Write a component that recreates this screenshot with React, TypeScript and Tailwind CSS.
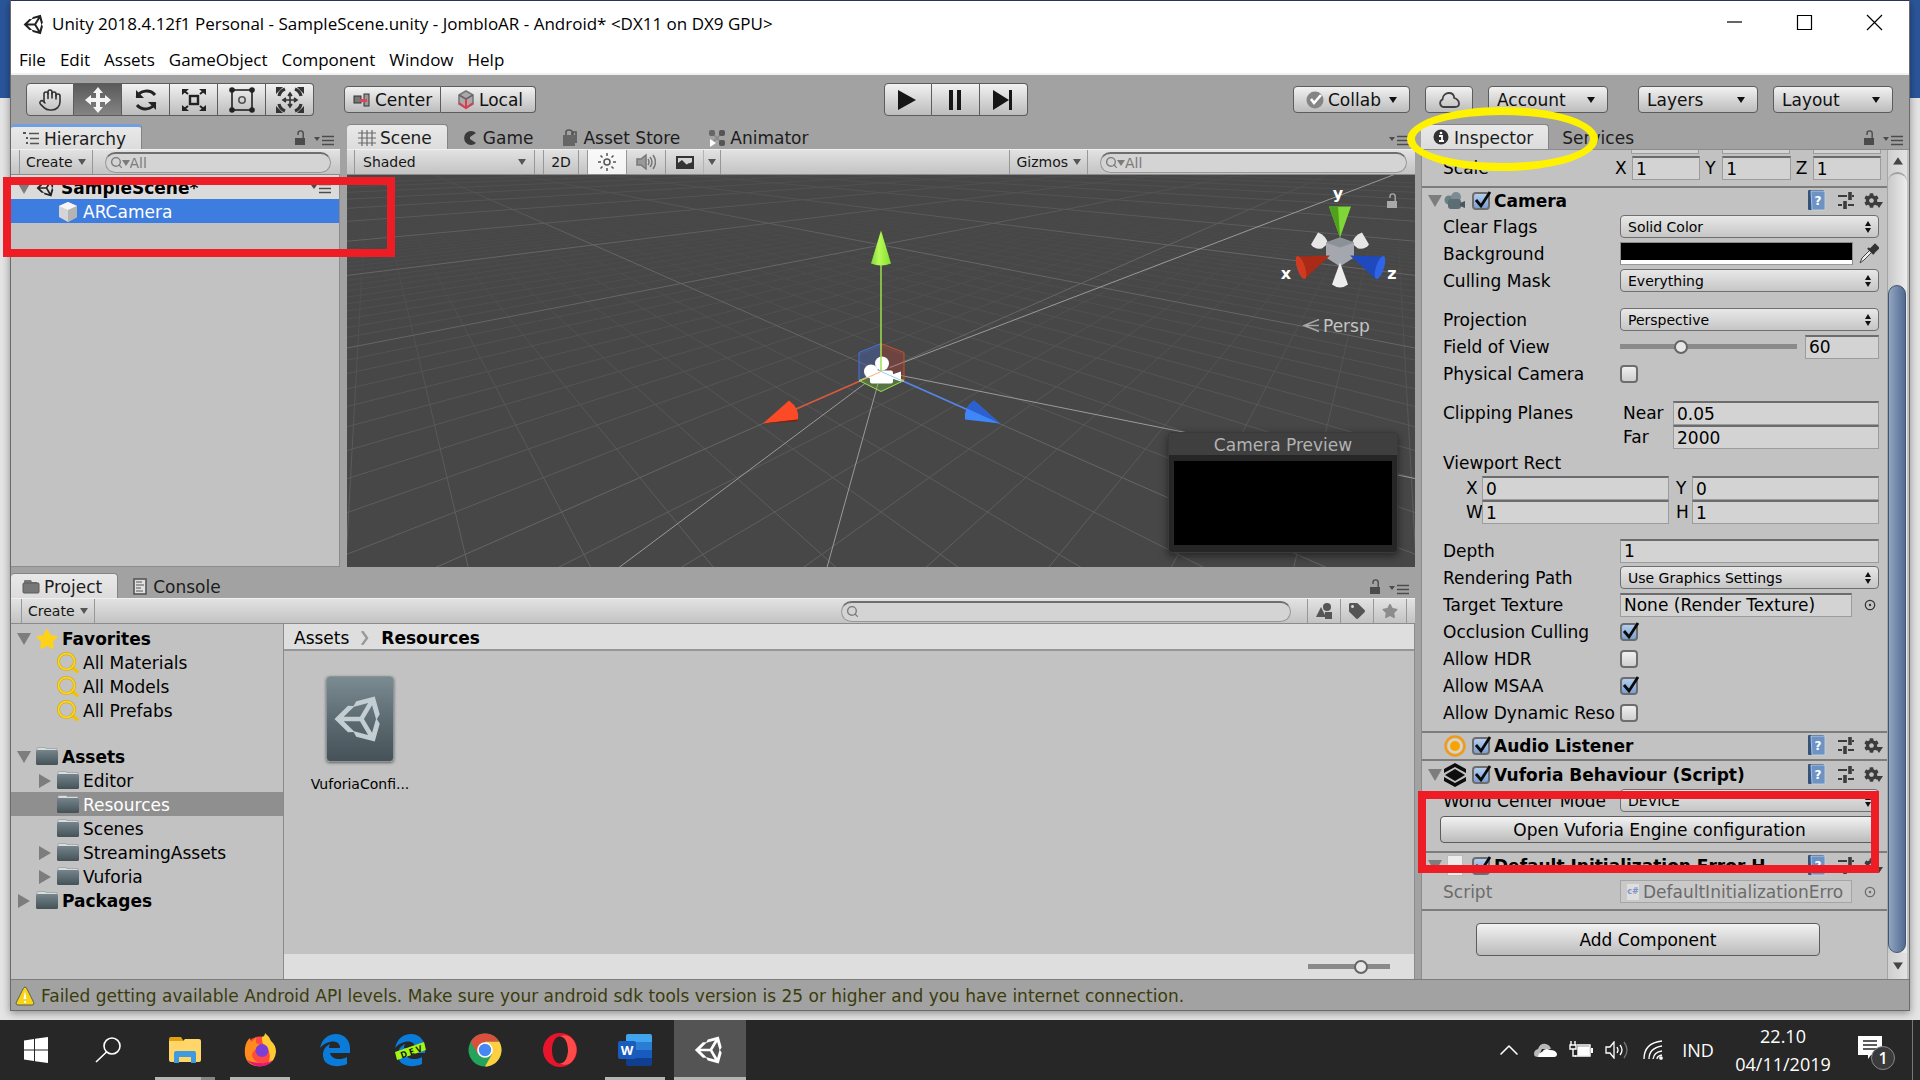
import type { ReactNode } from "react";
import { clsx } from "clsx";
import { ChevronUp, Hand, Search } from "lucide-react";
import { FaCog, FaStar, FaTag, FaUnity } from "react-icons/fa";

/* ---------- scene grid ---------- */

const FOCAL = 460;
const PITCH = 0.4556;
const CELL = 0.1008;
const CX = 880;
const CY = 371;

type Line = { key: string; x1: number; y1: number; x2: number; y2: number };

function project(u: number, v: number) {
  const depth = 1 + v * Math.cos(PITCH);
  return { x: CX + (FOCAL * u) / depth, y: CY - (FOCAL * v * Math.sin(PITCH)) / depth };
}

// One ground line, `dir` picks which of the two diagonal families it belongs to
function groundLine(k: number, dir: number): Line {
  const r = Math.SQRT1_2;
  const offset = k * CELL;
  const vBase = offset * r;
  const near = (-0.97 / Math.cos(PITCH) - vBase) / r;
  const at = (t: number) => project(dir * (t * r - offset * r), vBase + t * r);
  const a = at(near);
  const b = at(near + 90);
  return { key: `${dir}:${k}`, x1: a.x, y1: a.y, x2: b.x, y2: b.y };
}

const minorLines: Line[] = [];
const majorLines: Line[] = [];
for (let k = -60; k <= 90; k++) {
  for (const dir of [1, -1]) {
    if (k % 10 === 0) majorLines.push(groundLine(k, dir));
    else minorLines.push(groundLine(k, dir));
  }
}

const frustum: Line[] = [
  { key: "a", x1: 889, y1: 367, x2: 1396, y2: 173 },
  { key: "b", x1: 900, y1: 375, x2: 1414, y2: 478 },
  { key: "c", x1: 864, y1: 383, x2: 618, y2: 567 },
  { key: "d", x1: 877, y1: 383, x2: 826, y2: 567 },
];

/* ---------- small icons ---------- */

function LockIcon({ className }: { className?: string }) {
  return (
    <svg viewBox="0 0 12 16" className={clsx("h-4 w-3", className)} fill="none">
      <path d="M4 5V3.500a2.600 2.600 0 0 1 5.200 0V8" stroke="currentColor" strokeWidth="1.400" />
      <rect x="1" y="8" width="10" height="7" fill="currentColor" />
    </svg>
  );
}

function PaneMenuIcon() {
  return (
    <svg viewBox="0 0 20 12" className="h-3 w-5">
      <path d="M0 3h6L3 7z" fill="#4b4b4b" />
      <path d="M8 2.500h12M8 6.500h12M8 10.500h12" stroke="#4b4b4b" strokeWidth="1.400" />
    </svg>
  );
}

function DownArrow({ className }: { className?: string }) {
  return (
    <svg viewBox="0 0 8 6" className={clsx("h-[6px] w-2 shrink-0", className)}>
      <path d="M0 0h8L4 6z" fill="currentColor" />
    </svg>
  );
}

function Foldout({ open = false, className }: { open?: boolean; className?: string }) {
  return (
    <svg viewBox="0 0 14 14" className={clsx("size-[14px] shrink-0", className)}>
      <path d={open ? "M0 1h14L7 13z" : "M1 0v14l12-7z"} fill="#7d7d7d" />
    </svg>
  );
}

function FolderIcon() {
  return (
    <svg viewBox="0 0 22 20" className="h-5 w-[22px] shrink-0">
      <defs>
        <linearGradient id="folder" x2="0" y2="1">
          <stop offset="0" stopColor="#75858b" />
          <stop offset="1" stopColor="#445257" />
        </linearGradient>
      </defs>
      <path d="M1 4V1.500q0-1 1-1h7q1 0 1 1h11V4H1z" fill="#d9dcdd" stroke="#8c9294" strokeWidth=".6" />
      <rect x="0" y="3" width="22" height="15" rx="1.500" fill="url(#folder)" />
    </svg>
  );
}

function FindIcon() {
  return (
    <svg viewBox="0 0 22 22" className="size-[22px] shrink-0" fill="none">
      <path d="M14.500 14.500l5.500 5" stroke="#f0c400" strokeWidth="3.400" strokeLinecap="round" />
      <circle cx="9.500" cy="9.500" r="8" stroke="#c9a200" strokeWidth="2.800" />
      <circle cx="9.500" cy="9.500" r="8" stroke="#ffd61f" strokeWidth="1.800" />
    </svg>
  );
}

function CubeIcon() {
  return (
    <svg viewBox="0 0 20 20" className="size-5 shrink-0">
      <path d="M10 0l9 4v11l-9 5-9-5V4z" fill="#d5d5d5" />
      <path d="M10 0l9 4-9 4-9-4z" fill="#f6f6f6" />
      <path d="M10 8l9-4v11l-9 5z" fill="#b4b4b4" />
    </svg>
  );
}

function PickerIcon() {
  return (
    <svg viewBox="0 0 12 12" className="size-3 shrink-0" fill="none">
      <circle cx="6" cy="6" r="4.700" stroke="currentColor" strokeWidth="1.200" />
      <circle cx="6" cy="6" r="1.200" fill="currentColor" />
    </svg>
  );
}

function ToolIcon({ name }: { name: string }) {
  if (name === "Hand") return <Hand className="size-6 text-[#333]" strokeWidth={1.600} />;
  return (
    <svg viewBox="0 0 28 28" className="size-7" fill="none">
      {name === "Move" && (
        <path
          d="M14 1l5 6h-3v5h5V9l6 5-6 5v-3h-5v5h3l-5 6-5-6h3v-5H7v3l-6-5 6-5v3h5V7H9z"
          fill="#f4f4f4"
        />
      )}
      {name === "Rotate" && (
        <>
          <path d="M5 11c3-7 13-8 18-2M23 17c-3 7-13 8-18 2" stroke="#222" strokeWidth="3" />
          <path d="M4 4v8h8zM24 24v-8h-8z" fill="#222" />
        </>
      )}
      {name === "Scale" && (
        <>
          <rect x="10" y="10" width="8" height="8" stroke="#222" strokeWidth="2.400" />
          <path d="M8 8L3 4M20 8l5-4M8 20l-5 4M20 20l5 4" stroke="#222" strokeWidth="2" />
          <path d="M2 3h7L2 9zM26 3h-7l7 6zM2 25h7l-7-6zM26 25h-7l7-6z" fill="#222" />
        </>
      )}
      {name === "Rect" && (
        <>
          <rect x="4" y="4" width="20" height="20" stroke="#222" strokeWidth="1.600" />
          <circle cx="14" cy="14" r="3.200" stroke="#555" strokeWidth="1.600" />
          {[4, 24].map((x) =>
            [4, 24].map((y) => <circle key={`${x}${y}`} cx={x} cy={y} r="2.800" fill="#222" />)
          )}
        </>
      )}
      {name === "Transform" && (
        <>
          <path d="M9 3Q4 5 3 10M19 3q5 2 6 7M9 25q-5-2-6-7M19 25q5-2 6-7" stroke="#333" strokeWidth="3.200" />
          <path d="M0 1h7L0 8zM28 1h-7l7 7zM0 27h7l-7-7zM28 27h-7l7-7z" fill="#333" />
          <path d="M14 8v12M8 14h12M12 10l2-3 2 3M12 18l2 3 2-3M10 12l-3 2 3 2M18 12l3 2-3 2" stroke="#333" strokeWidth="1.600" />
        </>
      )}
    </svg>
  );
}

function TabIcon({ name }: { name: string }) {
  return (
    <svg viewBox="0 0 18 18" className="size-[18px] shrink-0" fill="none">
      {name === "Hierarchy" && (
        <>
          <path d="M1 3h3M4 8h2M4 13h2" stroke="#555" strokeWidth="2" />
          <path d="M7 3.500h10M8 8.500h9M8 13.500h9" stroke="#555" strokeWidth="1.600" />
        </>
      )}
      {name === "Scene" && (
        <path d="M4 1v16M9 1v16M14 1v16M0 4h18M0 9h18M0 14h18" stroke="#6a6a6a" strokeWidth="1.200" />
      )}
      {name === "Game" && <path d="M15 4a7 7 0 1 0 0 10L9 10V8z" fill="#3a3a3a" />}
      {name === "Asset Store" && (
        <>
          <rect x="2" y="6" width="12" height="11" fill="#666" />
          <path d="M5 6V3q0-2 3-2t3 2v3M12 6V3h3v11" stroke="#555" strokeWidth="1.600" />
        </>
      )}
      {name === "Animator" && (
        <>
          <path d="M5 5l8 8M13 5l-8 8" stroke="#888" strokeWidth="1.500" />
          <rect x="1" y="1" width="6" height="6" rx="2" fill="#666" />
          <rect x="11" y="1" width="6" height="6" rx="2" fill="#555" />
          <rect x="11" y="11" width="6" height="6" rx="2" fill="#555" />
          <path d="M2 10v8l6-4z" fill="#fff" />
        </>
      )}
      {name === "Inspector" && (
        <>
          <circle cx="9" cy="8" r="7.500" fill="#333" />
          <path d="M7 7h3v5M7 12h5" stroke="#fff" strokeWidth="1.800" />
          <circle cx="9" cy="4" r="1.300" fill="#fff" />
        </>
      )}
      {name === "Project" && (
        <>
          <path d="M2 5V3q0-1 1-1h6l1 2h5v2z" fill="#777" />
          <rect x="1" y="5" width="16" height="10" rx="1" fill="#777" stroke="#5c5c5c" />
        </>
      )}
      {name === "Console" && (
        <>
          <rect x="3" y="1" width="12" height="15" fill="#e0e0e0" stroke="#555" strokeWidth="1.600" />
          <path d="M5 4h6M5 7h8M5 10h5M5 13h7" stroke="#555" strokeWidth="1.200" />
        </>
      )}
    </svg>
  );
}

/* ---------- shared controls ---------- */

function Tab({ label, active, focused }: { label: string; active?: boolean; focused?: boolean }) {
  return (
    <button
      role="tab"
      aria-selected={!!active}
      className={clsx(
        "flex h-[25px] items-center gap-1 pt-[2px] pr-[15px] text-[17px] leading-5 text-[#1c1c1c]",
        active
          ? "rounded-t-sm border-t border-r border-[#848484] bg-linear-to-b from-[#e9e9e9] to-[#dcdcdc] pl-[11px]"
          : "pl-[13px]",
        focused && "border-t-[3px] border-t-[#6f9fe0]"
      )}
    >
      {label !== "Services" && <TabIcon name={label} />}
      {label}
    </button>
  );
}

function PaneOptions({ lock = true }: { lock?: boolean }) {
  return (
    <div className="ml-auto flex items-end gap-2 pr-[6px] pb-[3px]">
      {lock && <LockIcon className="text-[#4b4b4b]" />}
      <PaneMenuIcon />
    </div>
  );
}

function Strip({ children }: { children: ReactNode }) {
  return (
    <div className="flex h-[26px] shrink-0 border-t border-b border-t-[#f0f0f0] border-b-[#8b8b8b] bg-linear-to-b from-[#e2e2e2] to-[#c3c3c3]">
      {children}
    </div>
  );
}

function StripButton({ children, className }: { children: ReactNode; className?: string }) {
  return (
    <button className={clsx("flex items-center justify-center border-r border-[#979797] text-sm text-[#161616]", className)}>
      {children}
    </button>
  );
}

function SearchField({ label, placeholder, className }: { label: string; placeholder?: string; className?: string }) {
  return (
    <label
      className={clsx(
        "flex h-[21px] items-center self-center rounded-full border border-t-2 border-[#979797] border-t-[#6e6e6e] bg-[#d4d4d4] pl-1 text-[#7b7b7b]",
        className
      )}
    >
      <Search className="size-[13px] shrink-0" strokeWidth={2.500} />
      {placeholder && <DownArrow className="-ml-px" />}
      <input
        aria-label={label}
        placeholder={placeholder}
        className="w-full min-w-0 bg-transparent text-sm leading-4 outline-none placeholder:text-[#7b7b7b]"
      />
    </label>
  );
}

const raised = "border border-[#5c5c5c] bg-linear-to-b from-[#f2f2f2] to-[#bcbcbc]";

function BarButton({ children, className }: { children: ReactNode; className?: string }) {
  return (
    <button className={clsx("flex h-[27px] items-center rounded pt-px text-[17px] leading-5 text-[#111]", raised, className)}>
      {children}
    </button>
  );
}

function NumberField({ id, value, className }: { id: string; value: string; className?: string }) {
  return (
    <input
      id={id}
      defaultValue={value}
      className={clsx(
        "h-6 w-0 min-w-0 flex-1 border border-t-2 border-[#9c9c9c] border-t-[#6c6c6c] bg-[#d3d3d3] px-[3px] text-[17px] leading-5 text-black outline-none",
        className
      )}
    />
  );
}

function Popup({ id, value }: { id: string; value: string }) {
  return (
    <div className="relative flex-1">
      <select
        id={id}
        className="block h-[23px] w-full appearance-none rounded border border-[#6f6f6f] bg-linear-to-b from-[#e8e8e8] to-[#c6c6c6] px-[7px] text-sm leading-5 text-black"
      >
        <option>{value}</option>
      </select>
      <svg viewBox="0 0 6 12" className="pointer-events-none absolute top-[6px] right-2 h-3 w-[6px]">
        <path d="M0 5l3-5 3 5zM0 7l3 5 3-5z" fill="#111" />
      </svg>
    </div>
  );
}

function Tick({ id, checked, label }: { id?: string; checked?: boolean; label?: string }) {
  return (
    <span className="relative flex shrink-0">
      <input
        id={id}
        type="checkbox"
        defaultChecked={checked}
        aria-label={label}
        className="peer size-[18px] appearance-none rounded-sm border-2 border-[#6d6d6d] bg-linear-to-b from-[#f0f0f0] to-[#cfcfcf] checked:from-[#b4cdee] checked:to-[#7ba0d4]"
      />
      <svg viewBox="0 0 20 20" className="pointer-events-none absolute -top-px left-0 hidden size-5 peer-checked:block" fill="none">
        <path d="M4 9l5 6L18 1" stroke="#0a0a0a" strokeWidth="2.800" />
      </svg>
    </span>
  );
}

function Row({ label, id, children }: { label: string; id: string; children: ReactNode }) {
  return (
    <div className="flex h-[27px] items-center pr-2 pl-[21px]">
      <label htmlFor={id} className="w-[177px] shrink-0 overflow-hidden whitespace-nowrap">
        {label}
      </label>
      {children}
    </div>
  );
}

function Header({ title, icon, open }: { title: string; icon: ReactNode; open?: boolean }) {
  return (
    <div className="flex h-[25px] items-center pr-1 pl-[6px]">
      <span className="w-[14px]">{open && <Foldout open />}</span>
      <span className="mr-1 flex w-[26px] shrink-0 justify-center">{icon}</span>
      <Tick checked label={`${title} enabled`} />
      <h2 className="ml-1 flex-1 truncate font-bold">{title}</h2>
      <button aria-label={`${title} help`} className="mx-2">
        <svg viewBox="0 0 18 21" className="h-[21px] w-[18px]">
          <rect x="0" y="0" width="16" height="20" rx="1" fill="#33537d" />
          <path d="M3 1h14v19H4z" fill="#6d93c4" stroke="#c9d6e6" strokeWidth=".8" />
          <text x="10" y="15" textAnchor="middle" fontSize="12" fontWeight="bold" fill="#fff">?</text>
        </svg>
      </button>
      <button aria-label={`${title} presets`} className="mx-1">
        <svg viewBox="0 0 16 18" className="h-[18px] w-4" stroke="#3c3c3c" strokeWidth="2">
          <path d="M0 4h9M14 4h2M0 13h4M10 13h6" />
          <path d="M12 0v8M7 9v8" strokeWidth="3.600" />
        </svg>
      </button>
      <button aria-label={`${title} settings`} className="ml-[6px] flex items-end text-[#3c3c3c]">
        <FaCog className="size-[15px] self-start" />
        <DownArrow className="-ml-1" />
      </button>
    </div>
  );
}

/* ---------- window chrome ---------- */

function TitleBar() {
  return (
    <header className="shrink-0 border-b-2 border-[#f0f0f0] bg-white font-['Open_Sans',sans-serif] text-[17px] text-black">
      <div className="flex h-[46px] items-center pl-3">
        <FaUnity className="size-[23px] text-[#222]" />
        <h1 className="ml-[6px] flex-1">
          Unity 2018.4.12f1 Personal - SampleScene.unity - JombloAR - Android* &lt;DX11 on DX9 GPU&gt;
        </h1>
        {[
          { label: "Minimize", d: "M0 7h15" },
          { label: "Maximize", d: "M.5 .5h14v14h-14z" },
          { label: "Close", d: "M0 0l15 15M15 0L0 15" },
        ].map((b) => (
          <button key={b.label} aria-label={b.label} className="flex w-[70px] justify-center pb-[3px]">
            <svg viewBox="0 0 15 15" className="size-[15px] overflow-visible" fill="none" stroke="#000" strokeWidth="1.200">
              <path d={b.d} />
            </svg>
          </button>
        ))}
      </div>
      <nav className="flex h-[26px] items-center gap-[14px] px-2">
        {["File", "Edit", "Assets", "GameObject", "Component", "Window", "Help"].map((m) => (
          <button key={m}>{m}</button>
        ))}
      </nav>
    </header>
  );
}

function Toolbar() {
  return (
    <div className="flex h-[49px] shrink-0 items-center justify-between pr-4 pl-[15px]">
      <div className="flex flex-1 items-center gap-[30px]">
        <div className="flex h-[33px]">
          {["Hand", "Move", "Rotate", "Scale", "Rect", "Transform"].map((t) => (
            <button
              key={t}
              aria-label={`${t} tool`}
              className={clsx(
                "flex w-12 items-center justify-center border border-l-0 border-[#5c5c5c] bg-linear-to-b first:rounded-l-sm first:border-l last:rounded-r-sm",
                t === "Move" ? "from-[#5a5a5a] to-[#848484]" : "from-[#f2f2f2] to-[#bcbcbc]"
              )}
            >
              <ToolIcon name={t} />
            </button>
          ))}
        </div>
        <div className="flex">
          <BarButton className="w-[97px] gap-1 rounded-r-none pl-2">
            <svg viewBox="0 0 18 14" className="h-[14px] w-[18px] shrink-0">
              <rect x="1" y="3" width="7" height="7" fill="#777" stroke="#333" />
              <rect x="11" y="1" width="5" height="12" fill="#999" stroke="#333" />
              <path d="M7 6h7v3H7z" fill="#e0435a" />
            </svg>
            Center
          </BarButton>
          <BarButton className="w-[95px] gap-1 rounded-l-none border-l-0 pl-4">
            <svg viewBox="0 0 18 20" className="h-5 w-[18px] shrink-0" fill="none" strokeWidth="1.600">
              <path d="M9 1l7 4v9l-7 4-7-4V5z" fill="#aaa" stroke="#777" />
              <path d="M2 5l7 4 7-4" stroke="#666" />
              <path d="M9 9v9M2 13l7 5 7-5" stroke="#dc3c50" strokeWidth="2" />
            </svg>
            Local
          </BarButton>
        </div>
      </div>

      <div className="mr-2 flex h-[33px]">
        {[
          { label: "Play", d: "M0 0l18 10L0 20z" },
          { label: "Pause", d: "M4 0h4v20H4zM12 0h4v20h-4z" },
          { label: "Step", d: "M0 0l16 10L0 20zM16 0h3v20h-3z" },
        ].map((b) => (
          <button
            key={b.label}
            aria-label={b.label}
            className="flex w-12 items-center justify-center border border-l-0 border-[#5c5c5c] bg-linear-to-b from-[#f2f2f2] to-[#bcbcbc] first:rounded-l-sm first:border-l last:rounded-r-sm"
          >
            <svg viewBox="0 0 20 20" className="size-5">
              <path d={b.d} fill="#161616" />
            </svg>
          </button>
        ))}
      </div>

      <div className="flex flex-1 items-center justify-end gap-[15px]">
        <BarButton className="w-[117px] gap-1 px-3">
          <svg viewBox="0 0 18 18" className="size-[18px] shrink-0" fill="none">
            <circle cx="9" cy="9" r="8.500" fill="#858585" />
            <path d="M5 8l3 4 7-8" stroke="#fff" strokeWidth="2.600" />
          </svg>
          Collab
          <DownArrow className="ml-auto" />
        </BarButton>
        <BarButton className="w-12 justify-center">
          <svg viewBox="0 0 22 16" className="h-4 w-[22px]" fill="none" stroke="#3f3f3f" strokeWidth="1.800">
            <path d="M5 15a4 4 0 0 1-.500-7.500C4.500 3 8 1 11 1s5 2 5.200 5C19 7 21 9 21 11.500S19 15 17 15z" />
          </svg>
        </BarButton>
        <BarButton className="w-[120px] justify-between px-2">
          Account <DownArrow className="mr-1" />
        </BarButton>
        <BarButton className="ml-[15px] w-[120px] justify-between px-2">
          Layers <DownArrow className="mr-1" />
        </BarButton>
        <BarButton className="w-[120px] justify-between px-2">
          Layout <DownArrow className="mr-1" />
        </BarButton>
      </div>
    </div>
  );
}

/* ---------- panels ---------- */

function HierarchyPanel() {
  return (
    <section className="flex w-[329px] shrink-0 flex-col">
      <div className="flex items-end">
        <Tab label="Hierarchy" active focused />
        <PaneOptions />
      </div>
      <Strip>
        <StripButton className="ml-2 gap-[5px] border-l px-[6px]">
          Create <DownArrow className="text-[#555]" />
        </StripButton>
        <SearchField label="Search hierarchy" placeholder="All" className="mr-[9px] ml-3 flex-1" />
      </Strip>
      <div className="flex-1 border-r border-b border-[#8b8b8b] bg-[#c2c2c2] text-[17px] leading-5">
        <div className="flex h-6 items-center bg-[#dbdbdb] pt-px pr-2 pl-[6px]">
          <Foldout open />
          <FaUnity className="mx-[5px] size-5 text-[#222]" />
          <span className="flex-1 font-bold">SampleScene*</span>
          <PaneMenuIcon />
        </div>
        <div className="flex h-6 items-center gap-[5px] bg-[#3e7de0] pt-px pl-[47px] text-white">
          <CubeIcon />
          ARCamera
        </div>
      </div>
    </section>
  );
}

function GridLines({ lines, stroke, mask }: { lines: Line[]; stroke: string; mask?: string }) {
  return (
    <g stroke={stroke} mask={mask}>
      {lines.map(({ key, ...l }) => (
        <line key={key} {...l} />
      ))}
    </g>
  );
}

function SceneView() {
  return (
    <div className="relative min-h-0 flex-1 overflow-hidden bg-[#474747]">
      <svg viewBox="346 174 1068 393" preserveAspectRatio="xMidYMid slice" className="absolute inset-0 size-full">
        <defs>
          <linearGradient id="fadeMinor" gradientUnits="userSpaceOnUse" x1="0" x2="0" y1="195" y2="567">
            <stop offset="0" stopColor="#000" />
            <stop offset=".3" stopColor="#555" />
            <stop offset="1" stopColor="#fff" />
          </linearGradient>
          <linearGradient id="fadeMajor" gradientUnits="userSpaceOnUse" x1="0" x2="0" y1="165" y2="250">
            <stop offset="0" stopColor="#111" />
            <stop offset="1" stopColor="#fff" />
          </linearGradient>
          <mask id="minorMask" maskUnits="userSpaceOnUse" x="346" y="174" width="1068" height="393">
            <rect x="346" y="174" width="1068" height="393" fill="url(#fadeMinor)" />
          </mask>
          <mask id="majorMask" maskUnits="userSpaceOnUse" x="346" y="174" width="1068" height="393">
            <rect x="346" y="174" width="1068" height="393" fill="url(#fadeMajor)" />
          </mask>
          <linearGradient id="green">
            <stop offset="0" stopColor="#7bd836" />
            <stop offset=".4" stopColor="#b9fb57" />
            <stop offset="1" stopColor="#7fe02f" />
          </linearGradient>
        </defs>
        <GridLines lines={minorLines} stroke="#626262" mask="url(#minorMask)" />
        <GridLines lines={majorLines} stroke="#666666" mask="url(#majorMask)" />
        <GridLines lines={frustum} stroke="#9a9a9a" />

        {/* move handle planes */}
        <path d="M880 371L858 380V352l22-9z" fill="#4671e0" fillOpacity=".3" stroke="#4671e0" />
        <path d="M880 371l23 9V352l-23-9z" fill="#c8402f" fillOpacity=".3" stroke="#c8502f" />
        <path d="M880 371l23 9-23 11-22-11z" fill="#84d83e" fillOpacity=".3" stroke="#9be04b" />

        {/* camera gizmo */}
        <g fill="#fff">
          <ellipse cx="881" cy="363" rx="7" ry="7" />
          <ellipse cx="870" cy="371" rx="7" ry="7" />
          <rect x="869" y="370" width="23" height="13" rx="2" />
          <path d="M891 374l9-3v10l-9-3z" />
        </g>

        {/* move handle axes */}
        <path d="M880 371V264" stroke="#9be04b" strokeWidth="1.500" />
        <path d="M858 381L794 409" stroke="#d9583c" strokeWidth="1.500" />
        <path d="M903 381l63 28" stroke="#5585ea" strokeWidth="1.500" />
        <path d="M880 371l-22 10" stroke="#f2b27c" />
        <path d="M880 371l23 10" stroke="#8fd3f5" />
        <path d="M880 230l10 33q-10 4-20 0z" fill="url(#green)" />
        <path d="M762 423l26-23q11 8 9 19z" fill="#fb4a25" />
        <path d="M762 423l35-4-1 2z" fill="#7c2412" />
        <path d="M999 423l-26-23q-11 8-9 19z" fill="#3f86f8" />
        <path d="M999 423l-26-23q-5 3-7 8z" fill="#2c5fd0" />

        {/* orientation gizmo */}
        <path d="M1328 206h22l-11 31z" fill="#7ed637" />
        <path d="M1328 206h9l2 31z" fill="#4fa01d" />
        <path d="M1310 244l7-12q8 3 10 11l-6 5q-8 1-11-4z" fill="#e6e6e6" />
        <path d="M1368 244l-7-12q-8 3-10 11l6 5q8 1 11-4z" fill="#e6e6e6" />
        <path d="M1325 242l14-5 14 5v15l-14 9-14-9z" fill="#a4a7ad" />
        <path d="M1325 242l14-5 14 5-14 5z" fill="#8c9097" />
        <path d="M1329 255l-33 1 8 22z" fill="#a82a17" />
        <ellipse cx="1300" cy="267" rx="4" ry="12" transform="rotate(-18 1300 267)" fill="#cf3a20" />
        <path d="M1349 255l33 1-8 22z" fill="#1f49bd" />
        <ellipse cx="1379" cy="267" rx="4" ry="12" transform="rotate(18 1379 267)" fill="#2f64e4" />
        <path d="M1339 262l8 22q-8 6-16 0z" fill="#ededed" />
        <g fill="#fff" fontSize="16" fontWeight="bold" textAnchor="middle">
          <text x="1337" y="198">y</text>
          <text x="1285" y="278">x</text>
          <text x="1391" y="278">z</text>
        </g>
        <path d="M1318 319l-15 6 15 6M1303 325h15" fill="none" stroke="#a8a8a8" strokeWidth="1.400" />
        <text x="1322" y="331" fontSize="17" fill="#c4c4c4">Persp</text>
      </svg>
      <button aria-label="Lock view rotation" className="absolute top-[18px] right-[17px] text-[#a9a9a9]">
        <LockIcon />
      </button>
      <div className="absolute right-[17px] bottom-[14px] w-[230px] rounded border border-[#3a3a3a] bg-[#262626] shadow-[0_3px_8px_rgba(0,0,0,0.5)]">
        <div className="bg-[#3f3f3f] pt-[2px] text-center text-[17px] leading-5 text-[#b2b2b2]">Camera Preview</div>
        <div className="mx-[5px] mt-[6px] mb-[7px] h-[84px] bg-black" />
      </div>
    </div>
  );
}

function ScenePanel() {
  return (
    <section className="flex min-w-0 flex-1 flex-col">
      <div className="flex items-end">
        <Tab label="Scene" active />
        <Tab label="Game" />
        <Tab label="Asset Store" />
        <Tab label="Animator" />
        <PaneOptions lock={false} />
      </div>
      <Strip>
        <StripButton className="ml-[7px] w-[181px] border-l px-2">
          <span className="flex-1 text-left">Shaded</span> <DownArrow className="text-[#555]" />
        </StripButton>
        <StripButton className="ml-2 w-[36px] border-l">2D</StripButton>
        <StripButton className="ml-2 w-10 border-l bg-white/80">
          <svg viewBox="0 0 18 18" className="size-[18px]" fill="none" stroke="#555" strokeWidth="1.500">
            <circle cx="9" cy="9" r="3" />
            <path d="M9 0v3M9 15v3M0 9h3M15 9h3M2.500 2.500l2 2M13.500 13.500l2 2M2.500 15.500l2-2M13.500 4.500l2-2" />
          </svg>
        </StripButton>
        <StripButton className="w-[39px]">
          <svg viewBox="0 0 20 18" className="h-[18px] w-5" fill="none" stroke="#777" strokeWidth="1.500">
            <path d="M1 6h4l5-4v14l-5-4H1z" fill="#999" />
            <path d="M12 6q2 3 0 6M14 4q4 5 0 10M17 2q5 7 0 14" />
          </svg>
        </StripButton>
        <StripButton className="w-[38px] border-[#b4b4b4]">
          <svg viewBox="0 0 18 13" className="h-[13px] w-[18px]">
            <rect width="18" height="13" fill="#333" />
            <path d="M2 10V7l4-3 5 5 5-3V2H2z" fill="#e5e5e5" opacity=".9" />
            <path d="M2 10l4-5 4 4 3-2 3 3z" fill="#333" />
          </svg>
        </StripButton>
        <StripButton className="w-[17px]">
          <DownArrow className="text-[#555]" />
        </StripButton>
        <StripButton className="ml-auto gap-[5px] border-l px-[6px]">
          Gizmos <DownArrow className="text-[#555]" />
        </StripButton>
        <SearchField label="Search scene" placeholder="All" className="mr-2 ml-3 w-[307px]" />
      </Strip>
      <SceneView />
    </section>
  );
}

const tree = [
  { label: "Favorites", depth: 0, icon: "star", fold: "open" },
  { label: "All Materials", depth: 1, icon: "find" },
  { label: "All Models", depth: 1, icon: "find" },
  { label: "All Prefabs", depth: 1, icon: "find" },
  { label: "Assets", depth: 0, icon: "folder", fold: "open", spaced: true },
  { label: "Editor", depth: 1, icon: "folder", fold: "closed" },
  { label: "Resources", depth: 1, icon: "folder", selected: true },
  { label: "Scenes", depth: 1, icon: "folder" },
  { label: "StreamingAssets", depth: 1, icon: "folder", fold: "closed" },
  { label: "Vuforia", depth: 1, icon: "folder", fold: "closed" },
  { label: "Packages", depth: 0, icon: "folder", fold: "closed" },
];

function ProjectPanel() {
  return (
    <section className="flex h-[406px] shrink-0 flex-col">
      <div className="flex items-end">
        <Tab label="Project" active />
        <Tab label="Console" />
        <PaneOptions />
      </div>
      <Strip>
        <StripButton className="ml-[10px] gap-[5px] border-l px-[6px]">
          Create <DownArrow className="text-[#555]" />
        </StripButton>
        <SearchField label="Search project" className="mr-4 ml-auto w-[450px]" />
        <StripButton className="w-[34px] border-l">
          <svg viewBox="0 0 18 18" className="size-[18px]" fill="#555">
            <circle cx="12" cy="5" r="4" />
            <path d="M6 5l5 10H1z" />
            <rect x="10" y="10" width="7" height="7" />
          </svg>
        </StripButton>
        <StripButton className="w-[33px]">
          <FaTag className="size-4 text-[#555]" />
        </StripButton>
        <StripButton className="mr-2 w-[33px]">
          <FaStar className="size-4 text-[#8c8c8c]" />
        </StripButton>
      </Strip>
      <div className="flex min-h-0 flex-1 border-r border-[#8b8b8b] bg-[#c2c2c2]">
        <ul className="w-[273px] shrink-0 border-r border-[#8b8b8b] pt-[2px] text-[17px] leading-5 text-black">
          {tree.map((n) => (
            <li
              key={n.label}
              className={clsx(
                "flex h-6 items-center gap-1 pt-px",
                n.depth ? "pl-[27px]" : "pl-[6px] font-bold",
                n.spaced && "mt-[22px]",
                n.selected && "bg-[#8f8f8f] text-white"
              )}
            >
              <span className="w-[15px] shrink-0">{n.fold && <Foldout open={n.fold === "open"} />}</span>
              {n.icon === "star" && <FaStar className="w-[22px] text-xl text-[#ffd21a]" />}
              {n.icon === "find" && <FindIcon />}
              {n.icon === "folder" && <FolderIcon />}
              {n.label}
            </li>
          ))}
        </ul>
        <div className="flex min-w-0 flex-1 flex-col">
          <div className="flex h-[27px] shrink-0 items-center gap-[11px] border-b-2 border-[#969696] bg-[#dedede] px-[10px] pt-[2px] text-[17px] leading-5 text-black">
            Assets
            <svg viewBox="0 0 10 14" className="h-[14px] w-[10px]" fill="none">
              <path d="M2 0l5 7-5 7" stroke="#999" strokeWidth="2.400" />
            </svg>
            <span className="font-bold">Resources</span>
          </div>
          <div className="flex-1 px-[27px] pt-[25px]">
            <figure className="flex w-[98px] flex-col items-center">
              <div className="flex h-[86px] w-[68px] items-center justify-center rounded-sm border border-[#8a9396] bg-linear-to-b from-[#7b8b92] via-[#5d6c72] to-[#455359] shadow-[0_1px_3px_rgba(0,0,0,0.5)]">
                <FaUnity className="size-[54px] text-[#c3ced3]" />
              </div>
              <figcaption className="mt-3 text-sm text-black">VuforiaConfi...</figcaption>
            </figure>
          </div>
          <div className="flex h-[25px] shrink-0 items-center justify-end bg-[#dedede] pr-6">
            <input
              type="range"
              aria-label="Icon size"
              defaultValue="68"
              className="h-4 w-[82px] appearance-none bg-[linear-gradient(#8a8a8a,#8a8a8a)] bg-[length:100%_5px] bg-center bg-no-repeat [&::-webkit-slider-thumb]:size-[14px] [&::-webkit-slider-thumb]:appearance-none [&::-webkit-slider-thumb]:rounded-full [&::-webkit-slider-thumb]:border-2 [&::-webkit-slider-thumb]:border-[#666] [&::-webkit-slider-thumb]:bg-[#e8e8e8]"
            />
          </div>
        </div>
      </div>
    </section>
  );
}

function InspectorPanel() {
  return (
    <section className="flex w-[488px] shrink-0 flex-col">
      <div className="flex items-end">
        <Tab label="Inspector" active />
        <Tab label="Services" />
        <PaneOptions />
      </div>
      <div className="flex min-h-0 flex-1 border-t border-l border-[#8b8b8b] bg-[#c2c2c2]">
        <div className="min-w-0 flex-1 overflow-hidden text-[17px] leading-6 text-black">
          <div className="flex justify-end gap-[23px] pr-[6px]">
            {["x", "y", "z"].map((a) => (
              <div key={a} className="h-1 w-[68px] border border-t-0 border-[#9c9c9c] bg-[#d3d3d3]" />
            ))}
          </div>
          <div className="mt-[2px] flex h-6 items-center pr-[6px] pl-[21px]">
            <span className="w-[172px] shrink-0">Scale</span>
            <div className="flex min-w-0 flex-1 gap-[5px]">
              {["X", "Y", "Z"].map((a) => (
                <div key={a} className="flex min-w-0 flex-1">
                  <label htmlFor={`scale${a}`} className="w-[17px] shrink-0">{a}</label>
                  <NumberField id={`scale${a}`} value="1" />
                </div>
              ))}
            </div>
          </div>

          <div className="mt-[6px] border-t-2 border-[#7c7c7c] pb-[5px]">
            <Header
              open
              title="Camera"
              icon={
                <svg viewBox="0 0 22 18" className="h-[18px] w-[22px]">
                  <circle cx="5" cy="8" r="4.500" fill="#6d7f86" />
                  <circle cx="12" cy="5" r="5" fill="#7b8c93" />
                  <rect x="4" y="7" width="13" height="10" rx="3" fill="#5c6d74" />
                  <path d="M16 11l5-2v7l-5-2z" fill="#48575d" />
                </svg>
              }
            />
            <Row label="Clear Flags" id="clear"><Popup id="clear" value="Solid Color" /></Row>
            <Row label="Background" id="background">
              <button id="background" aria-label="Background colour" className="h-[23px] flex-1 border border-[#8b8b8b] border-b-[#999] bg-white pb-1">
                <span className="block h-full bg-black" />
              </button>
              <svg viewBox="0 0 22 22" className="ml-1 size-[22px]" fill="none">
                <path d="M3 20l2-5 8-8 2 2-8 8z" fill="#eee" stroke="#444" />
                <path d="M11 5l6 6M13 7l5-5 3 3-5 5" stroke="#333" strokeWidth="2.400" fill="#333" />
              </svg>
            </Row>
            <Row label="Culling Mask" id="culling"><Popup id="culling" value="Everything" /></Row>
            <div className="h-3" />
            <Row label="Projection" id="projection"><Popup id="projection" value="Perspective" /></Row>
            <Row label="Field of View" id="fov">
              <input
                id="fov"
                type="range"
                min="1"
                max="179"
                defaultValue="60"
                className="mr-2 h-4 w-[177px] appearance-none bg-[linear-gradient(#8a8a8a,#8a8a8a)] bg-[length:100%_5px] bg-center bg-no-repeat [&::-webkit-slider-thumb]:size-[14px] [&::-webkit-slider-thumb]:appearance-none [&::-webkit-slider-thumb]:rounded-full [&::-webkit-slider-thumb]:border-2 [&::-webkit-slider-thumb]:border-[#666] [&::-webkit-slider-thumb]:bg-[#e8e8e8]"
              />
              <NumberField id="fovValue" value="60" />
            </Row>
            <Row label="Physical Camera" id="physical"><Tick id="physical" /></Row>

            <div className="mt-[14px] flex pr-2 pl-[21px]">
              <span className="w-[180px] shrink-0">Clipping Planes</span>
              <div className="min-w-0 flex-1">
                <div className="flex"><label htmlFor="near" className="w-[50px]">Near</label><NumberField id="near" value="0.05" /></div>
                <div className="flex"><label htmlFor="far" className="w-[50px]">Far</label><NumberField id="far" value="2000" /></div>
              </div>
            </div>
            <div className="flex h-[27px] items-center pl-[21px]">Viewport Rect</div>
            <div className="mb-[13px] grid grid-cols-2 gap-x-[7px] pr-2 pl-11">
              {[["X", "0"], ["Y", "0"], ["W", "1"], ["H", "1"]].map(([a, v]) => (
                <div key={a} className="flex min-w-0">
                  <label htmlFor={`rect${a}`} className="w-4 shrink-0">{a}</label>
                  <NumberField id={`rect${a}`} value={v} />
                </div>
              ))}
            </div>

            <Row label="Depth" id="depth"><NumberField id="depth" value="1" /></Row>
            <Row label="Rendering Path" id="path"><Popup id="path" value="Use Graphics Settings" /></Row>
            <Row label="Target Texture" id="texture">
              <NumberField id="texture" value="None (Render Texture)" />
              <span className="mr-[3px] ml-3 flex text-[#333]"><PickerIcon /></span>
            </Row>
            <Row label="Occlusion Culling" id="occlusion"><Tick id="occlusion" checked /></Row>
            <Row label="Allow HDR" id="hdr"><Tick id="hdr" /></Row>
            <Row label="Allow MSAA" id="msaa"><Tick id="msaa" checked /></Row>
            <Row label="Allow Dynamic Reso" id="dynamic"><Tick id="dynamic" /></Row>
          </div>

          <div className="border-t-2 border-[#7c7c7c] pb-px">
            <Header
              title="Audio Listener"
              icon={
                <svg viewBox="0 0 22 22" className="size-[22px]" fill="none">
                  <circle cx="11" cy="11" r="9.500" stroke="#f29a12" strokeWidth="2.400" />
                  <circle cx="11" cy="11" r="7.500" fill="#dcd3c2" />
                  <circle cx="11" cy="11" r="5" fill="#f7a400" />
                </svg>
              }
            />
          </div>

          <div className="border-t-2 border-[#7c7c7c] pt-px pb-2">
            <Header
              open
              title="Vuforia Behaviour (Script)"
              icon={
                <svg viewBox="0 0 22 24" className="h-6 w-[22px]">
                  <path d="M11 0l11 6v4L11 4 0 10V6zM11 24l11-6v-4l-11 6-11-6v4z" fill="#0d0d0d" />
                  <path d="M11 6l10 6-10 6-10-6z" fill="#0d0d0d" />
                </svg>
              }
            />
            <Row label="World Center Mode" id="world"><Popup id="world" value="DEVICE" /></Row>
            <div className="pt-[2px] pr-2 pl-[18px]">
              <button className={clsx("h-[27px] w-full rounded", raised)}>Open Vuforia Engine configuration</button>
            </div>
          </div>

          <div className="border-y-2 border-[#7c7c7c] pb-1">
            <Header
              open
              title="Default Initialization Error H..."
              icon={<span className="h-[21px] w-4 border border-[#bbb] bg-[#ececec]" />}
            />
            <div className="text-[#6b6b6b]">
              <Row label="Script" id="script">
                <div className="flex h-[23px] min-w-0 flex-1 items-center border border-[#a5a5a5] bg-[#c9c9c9] pl-[6px]">
                  <span className="mr-1 flex h-4 w-3 shrink-0 items-center justify-center bg-[#dedede] text-[8px] font-bold text-[#7d92c8]">c#</span>
                  <input id="script" disabled defaultValue="DefaultInitializationErro" className="min-w-0 flex-1" />
                </div>
                <span className="mr-[3px] ml-3 flex"><PickerIcon /></span>
              </Row>
            </div>
          </div>

          <button className={clsx("mt-3 ml-[54px] block h-[33px] w-[344px] rounded-sm", raised)}>Add Component</button>
        </div>

        <div className="mr-[2px] flex w-5 shrink-0 flex-col items-center border-l border-[#a5a5a5] bg-linear-to-r from-[#cfcfcf] to-[#e2e2e2]">
          <DownArrow className="my-2 rotate-180 scale-125 text-[#444]" />
          <div className="flex w-full flex-1 flex-col rounded-t-full border-t-2 border-[#a0a0a0] bg-linear-to-r from-[#c9c9c9] to-[#ececec] pt-[111px]">
            <div className="w-[18px] flex-1 rounded-full border border-[#41536f] bg-linear-to-r from-[#93a6c1] to-[#526b92]" />
          </div>
          <DownArrow className="my-[10px] scale-125 text-[#444]" />
        </div>
      </div>
    </section>
  );
}

/* ---------- desktop ---------- */

function AppLogo({ name }: { name: string }) {
  if (name === "Unity") return <FaUnity className="size-8 text-white" />;
  return (
    <svg viewBox="0 0 34 34" className="size-[34px]" fill="none">
      {name === "Search" && (
        <path d="M29 13a8 8 0 1 1-16 0 8 8 0 0 1 16 0zM15.500 19L5 29" stroke="#fff" strokeWidth="1.600" />
      )}
      {name === "Start" && (
        <path d="M5 7.500l10-1.500v10.500H5zM16 5.800L29 4v12.500H16zM5 17.500h10V28L5 26.500zM16 17.500h13V30l-13-1.800z" fill="#fff" />
      )}
      {name === "File Explorer" && (
        <>
          <path d="M1 6q0-2 2-2h10l2 3v3H1z" fill="#e0a010" />
          <path d="M1 8h14l2-2h14q2 0 2 2v19q0 2-2 2H3q-2 0-2-2z" fill="#ffd667" />
          <path d="M6 29V20q0-2 2-2h18q2 0 2 2v10h-5v-6H11v6H6z" fill="#3f9be0" />
        </>
      )}
      {name === "Firefox" && (
        <>
          <circle cx="17" cy="18.500" r="15" fill="#ff4a3d" />
          <path d="M19 4q3-1 3-4 4 3 6 8 5 4 5 11-1 9-8 12 4-9-1-16-6-4-5-11z" fill="#ffcb32" />
          <path d="M2 15q1-7 5-10l1 4 5-4v5l4 2-3 4q-5 2-5 7 3 8 12 7-9 6-16-1-4-5-3-14z" fill="#ff8a1e" />
          <circle cx="19" cy="17.500" r="6.500" fill="#7b3fd6" />
          <path d="M4 27q6 7 14 6 8 0 12-6-6 4-12 3-8 0-14-3z" fill="#e8177c" />
        </>
      )}
      {(name === "Edge" || name === "Edge Dev") && (
        <path
          d="M2 15C4 6 10 1 18 1c9 0 14 7 14 14v5H12c1 6 10 8 17 4v7c-9 4-23 3-24-8-.500-6 3-10 7-12-1 2-1 3-1 4h11c0-9-13-8-20 0z"
          fill="#0a7bd8"
        />
      )}
      {name === "Edge Dev" && (
        <>
          <path d="M2 19L31 9l2 8L4 27z" fill="#a6f613" />
          <text x="18" y="22" transform="rotate(-19 18 18)" textAnchor="middle" fontSize="9" fontWeight="bold" fill="#111">
            D E V
          </text>
        </>
      )}
      {name === "Chrome" && (
        <>
          <circle cx="17" cy="17" r="16.500" fill="#24a45a" />
          <path d="M2.700 8.800A16.500 16.500 0 0 1 31.300 8.800H17L9.900 21z" fill="#d9503f" />
          <path d="M31.300 8.800A16.500 16.500 0 0 1 17 33.500L24.100 21 17 8.800z" fill="#fdcf41" />
          <circle cx="17" cy="17" r="7.800" fill="#fff" />
          <circle cx="17" cy="17" r="6.200" fill="#4688f1" />
        </>
      )}
      {name === "Opera" && (
        <>
          <path
            fillRule="evenodd"
            d="M17 0a17 17 0 1 0 0 34 17 17 0 0 0 0-34zM17 3.500c5 0 8 6 8 13.500s-3 13.500-8 13.500S9 24.500 9 17s3-13.500 8-13.500z"
            fill="#e8142c"
          />
          <path d="M17 3.500q6-3 11 1a17 17 0 0 1 0 25q-5 4-11 1c5 0 8-6 8-13.500S22 3.500 17 3.500z" fill="#ff4a4a" />
        </>
      )}
      {name === "Word" && (
        <>
          <path d="M8 3q0-2 2-2h22q2 0 2 2v6H8z" fill="#41a5ee" />
          <path d="M8 9h26v8H8z" fill="#2b7cd3" />
          <path d="M8 17h26v8H8z" fill="#185abd" />
          <path d="M8 25h26v6q0 2-2 2H10q-2 0-2-2z" fill="#103f91" />
          <rect x="0" y="8" width="18" height="18" rx="2" fill="#1a5cbd" />
          <text x="9" y="22" textAnchor="middle" fontSize="13" fontWeight="bold" fill="#fff">W</text>
        </>
      )}
    </svg>
  );
}

function Taskbar() {
  return (
    <footer className="flex h-[60px] shrink-0 bg-[#262726] font-['Open_Sans',sans-serif] text-lg text-white">
      {["Start", "Search"].map((a) => (
        <button key={a} aria-label={a} className="flex w-[72px] items-center justify-center">
          <AppLogo name={a} />
        </button>
      ))}
      <div className="ml-[5px] flex gap-[3px]">
        {["File Explorer", "Firefox", "Edge", "Edge Dev", "Chrome", "Opera", "Word", "Unity"].map((a) => (
          <button
            key={a}
            aria-label={a}
            className={clsx("relative flex w-[72px] items-center justify-center", a === "Unity" && "bg-[#535453]")}
          >
            <AppLogo name={a} />
            {a === "File Explorer" && (
              <span className="absolute inset-x-[6px] bottom-0 h-[3px] border-r-[14px] border-[#868686] bg-[#b5b5b5]" />
            )}
            {(a === "Firefox" || a === "Word") && (
              <span className="absolute inset-x-[6px] bottom-0 h-[3px] bg-[#b5b5b5]" />
            )}
            {a === "Unity" && <span className="absolute inset-x-0 bottom-0 h-[3px] bg-[#b5b5b5]" />}
          </button>
        ))}
      </div>
      <div className="ml-auto flex items-center">
        <button aria-label="Hidden icons" className="flex w-9 justify-center">
          <ChevronUp className="size-8" strokeWidth={1.200} />
        </button>
        <span className="flex w-9 justify-center">
          <svg viewBox="0 0 24 16" className="h-4 w-6">
            <path d="M1 12q0-4 4-5 2-6 8-5 4 1 5 5H9L5 15q-4 0-4-3z" fill="#b8b8b8" />
            <path d="M5 15q0-4 4-5 3-5 8-2 6 0 7 4 0 3-3 3z" fill="#fff" />
          </svg>
        </span>
        <span className="flex w-9 justify-center">
          <svg viewBox="0 0 24 18" className="h-[18px] w-6" fill="none" stroke="#fff" strokeWidth="1.400">
            <path d="M2 0v4M6 0v4M1 4h6v4H1zM4 8v7h3" />
            <path d="M8 4h13v11H6" />
            <path d="M9 6h11v8H9z" fill="#fff" />
            <path d="M23 7v5" strokeWidth="2" />
          </svg>
        </span>
        <span className="flex w-9 justify-center">
          <svg viewBox="0 0 24 18" className="h-[18px] w-6" fill="none" stroke="#fff" strokeWidth="1.300">
            <path d="M1 6h4l4-5v16l-4-5H1z" />
            <path d="M12 6q2 3 0 6M15 4q4 5 0 10" />
            <path d="M19 1q6 8 0 16" stroke="#777" />
          </svg>
        </span>
        <span className="flex w-9 justify-center">
          <svg viewBox="0 0 20 20" className="size-5" fill="none" stroke="#fff" strokeWidth="1.300">
            <path d="M1 19Q1 3 19 1M6 19Q6 8 19 6M10 19q1-7 9-8M14 19q0-3 5-4" />
            <circle cx="18" cy="18" r="1.200" fill="#fff" />
          </svg>
        </span>
        <span className="w-[54px] text-center">IND</span>
        <time className="flex w-[116px] flex-col items-center leading-7">
          <span>22.10</span>
          <span>04/11/2019</span>
        </time>
        <button aria-label="Notifications" className="relative flex w-[58px] justify-center pb-1">
          <svg viewBox="0 0 24 24" className="size-6">
            <path d="M0 0h24v19H13l-3 4v-4H0z" fill="#fff" />
            <path d="M5 5h14M5 9h14M5 13h14" stroke="#262726" strokeWidth="1.400" />
          </svg>
          <span className="absolute top-[10px] right-[4px] size-6 rounded-full border border-[#888] bg-[#3a3b3a] text-center text-base leading-[22px] font-semibold">
            1
          </span>
        </button>
        <div className="ml-[13px] h-[60px] w-2 border-l border-[#777]" />
      </div>
    </footer>
  );
}

export default function App() {
  return (
    <div className="relative flex h-screen min-h-[1080px] min-w-[1500px] flex-col overflow-hidden bg-[linear-gradient(#2a5699_98px,#e4e4e4_98px)] font-['DejaVu_Sans',sans-serif]">
      <main className="mx-[10px] mb-[9px] flex min-h-0 flex-1 flex-col border border-t-[#26355a] border-[#6b6b6b] bg-[#a2a2a2] shadow-[0_2px_8px_rgba(0,0,0,0.4)]">
        <TitleBar />
        <Toolbar />
        <div className="flex min-h-0 flex-1 gap-[6px]">
          <div className="flex min-w-0 flex-1 flex-col gap-[6px]">
            <div className="flex min-h-0 flex-1 gap-[7px]">
              <HierarchyPanel />
              <ScenePanel />
            </div>
            <ProjectPanel />
          </div>
          <InspectorPanel />
        </div>
        <div className="flex h-[31px] shrink-0 items-center gap-[6px] border-t border-[#7d7d7d] pt-[2px] pl-1 text-[17px] leading-5 text-[#3a3c0c]">
          <svg viewBox="0 0 20 20" className="size-5 shrink-0">
            <path d="M10 1q1 0 2 2l7 14q0 2-2 2H3q-2 0-2-2L8 3q1-2 2-2z" fill="#f7d417" stroke="#5f5f4a" />
            <path d="M10 5l1.500 8h-3zM9 15h2v2H9z" fill="#fff" />
          </svg>
          Failed getting available Android API levels. Make sure your android sdk tools version is 25 or higher and you have internet connection.
        </div>
      </main>
      <Taskbar />

      {/* highlights drawn over the window */}
      <div className="pointer-events-none absolute top-[177px] left-[3px] h-20 w-[392px] border-8 border-[#ee1c24]" />
      <div className="pointer-events-none absolute top-[791px] right-[41px] h-[82px] w-[461px] border-8 border-[#ee1c24]" />
      <div className="pointer-events-none absolute top-[107px] right-[322px] h-16 w-[191px] rounded-[50%] border-8 border-[#fff200]" />
    </div>
  );
}
